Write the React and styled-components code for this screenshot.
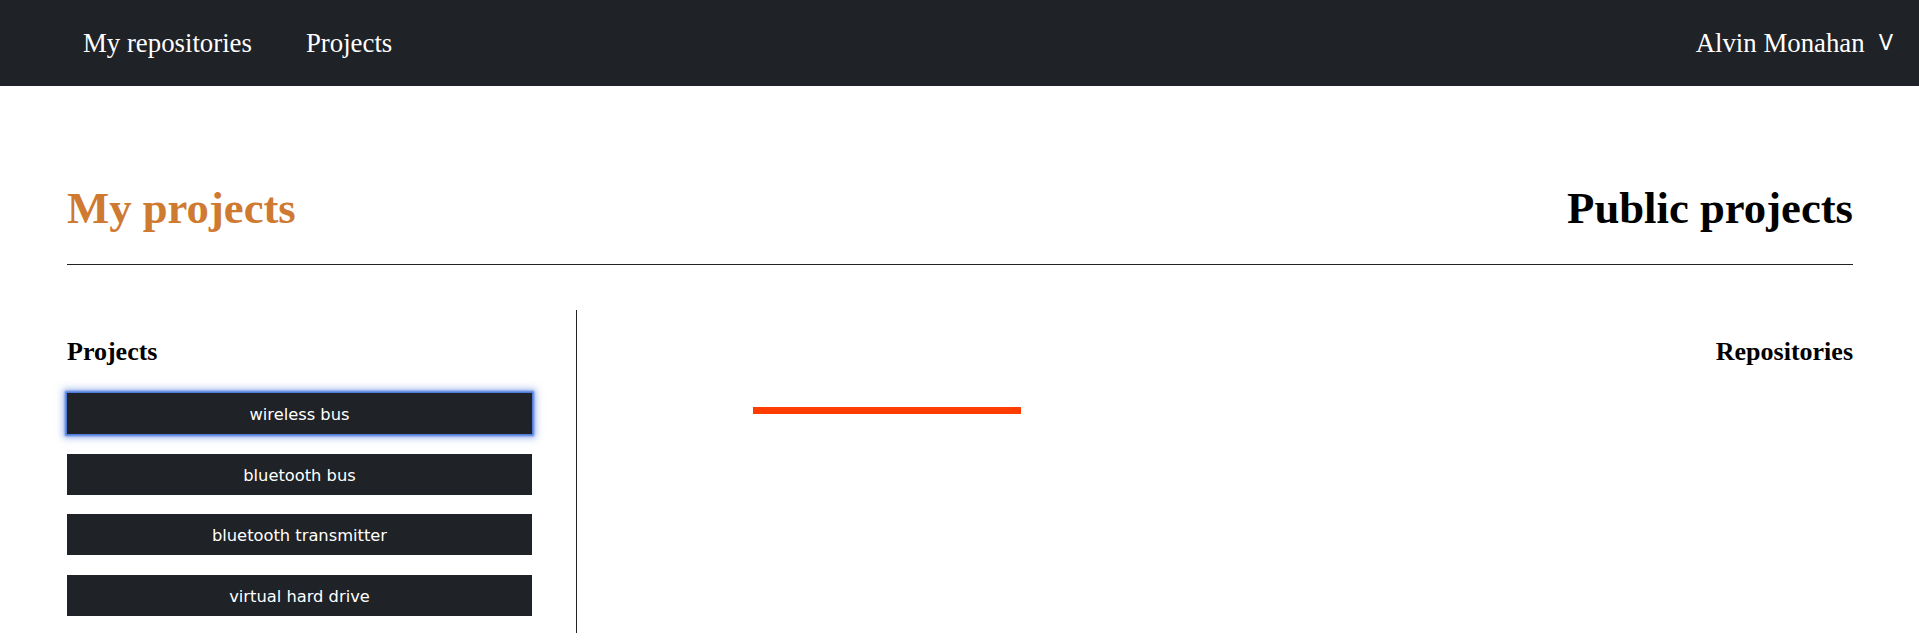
import React from 'react';
import styled, { createGlobalStyle } from 'styled-components';

const GlobalStyle = createGlobalStyle`
  body {
    margin: 0;
    background: #fff;
    font-family: 'Liberation Serif', 'Times New Roman', serif;
  }
`;

const NavBar = styled.nav`
  display: flex;
  align-items: center;
  justify-content: space-between;
  height: 86px;
  padding: 0 26px 0 83px;
  background-color: #1f2226;
  color: #fff;
  box-sizing: border-box;
`;

const NavLinks = styled.div`
  display: flex;
  gap: 54px;
`;

const NavLink = styled.a`
  font-size: 26.8px;
  color: #fff;
  text-decoration: none;
  cursor: pointer;
`;

const UserMenu = styled.div`
  display: flex;
  align-items: center;
  gap: 14px;
  font-size: 26.8px;
`;

const Caret = styled.span`
  font-family: 'DejaVu Sans', sans-serif;
  font-size: 21px;
  font-weight: normal;
`;

const Main = styled.main`
  padding: 97px 66px 0 67px;
`;

const HeaderRow = styled.div`
  display: flex;
  justify-content: space-between;
  align-items: baseline;
  padding-bottom: 31px;
  border-bottom: 1px solid #222;
`;

const PageTitle = styled.h1`
  margin: 0;
  font-size: 44.7px;
  line-height: 50px;
  font-weight: bold;
  color: ${props => (props.$active ? '#cf7a31' : '#000')};
`;

const Columns = styled.div`
  display: flex;
  margin-top: 45px;
  align-items: flex-start;
`;

const Sidebar = styled.section`
  width: 510px;
  flex-shrink: 0;
  border-right: 1px solid #222;
  box-sizing: border-box;
  padding-top: 27px;
`;

const SectionTitle = styled.h3`
  margin: 0;
  font-size: 26px;
  line-height: 30px;
  font-weight: bold;
  color: #000;
  text-align: ${props => props.$align || 'left'};
`;

const ProjectList = styled.div`
  display: flex;
  flex-direction: column;
  margin-top: 26px;
`;

const ProjectButton = styled.button`
  width: 465px;
  height: 41px;
  margin-bottom: 19.5px;
  padding: 2px 0 0;
  border: none;
  border-radius: 0;
  background-color: #1f2226;
  color: #fff;
  font-family: 'DejaVu Sans', sans-serif;
  font-size: 16.3px;
  cursor: pointer;
  box-shadow: ${props =>
    props.$focused
      ? '0 0 2px 2px #4a78dc, 0 0 7px 4px rgba(74, 120, 220, 0.5)'
      : 'none'};

  &:last-child {
    margin-bottom: 17px;
  }
`;

const Content = styled.section`
  flex: 1;
  padding-top: 27px;
`;

const LoadingBar = styled.div`
  width: 268px;
  height: 7px;
  margin: 40px 0 0 176px;
  background-color: #ff3d00;
`;

const projects = [
  'wireless bus',
  'bluetooth bus',
  'bluetooth transmitter',
  'virtual hard drive',
];

export default function App() {
  return (
    <>
      <GlobalStyle />
      <NavBar>
        <NavLinks>
          <NavLink>My repositories</NavLink>
          <NavLink>Projects</NavLink>
        </NavLinks>
        <UserMenu>
          <span>Alvin Monahan</span>
          <Caret>V</Caret>
        </UserMenu>
      </NavBar>
      <Main>
        <HeaderRow>
          <PageTitle $active>My projects</PageTitle>
          <PageTitle>Public projects</PageTitle>
        </HeaderRow>
        <Columns>
          <Sidebar>
            <SectionTitle>Projects</SectionTitle>
            <ProjectList>
              {projects.map((name, i) => (
                <ProjectButton key={name} $focused={i === 0}>
                  {name}
                </ProjectButton>
              ))}
            </ProjectList>
          </Sidebar>
          <Content>
            <SectionTitle $align="right">Repositories</SectionTitle>
            <LoadingBar />
          </Content>
        </Columns>
      </Main>
    </>
  );
}
